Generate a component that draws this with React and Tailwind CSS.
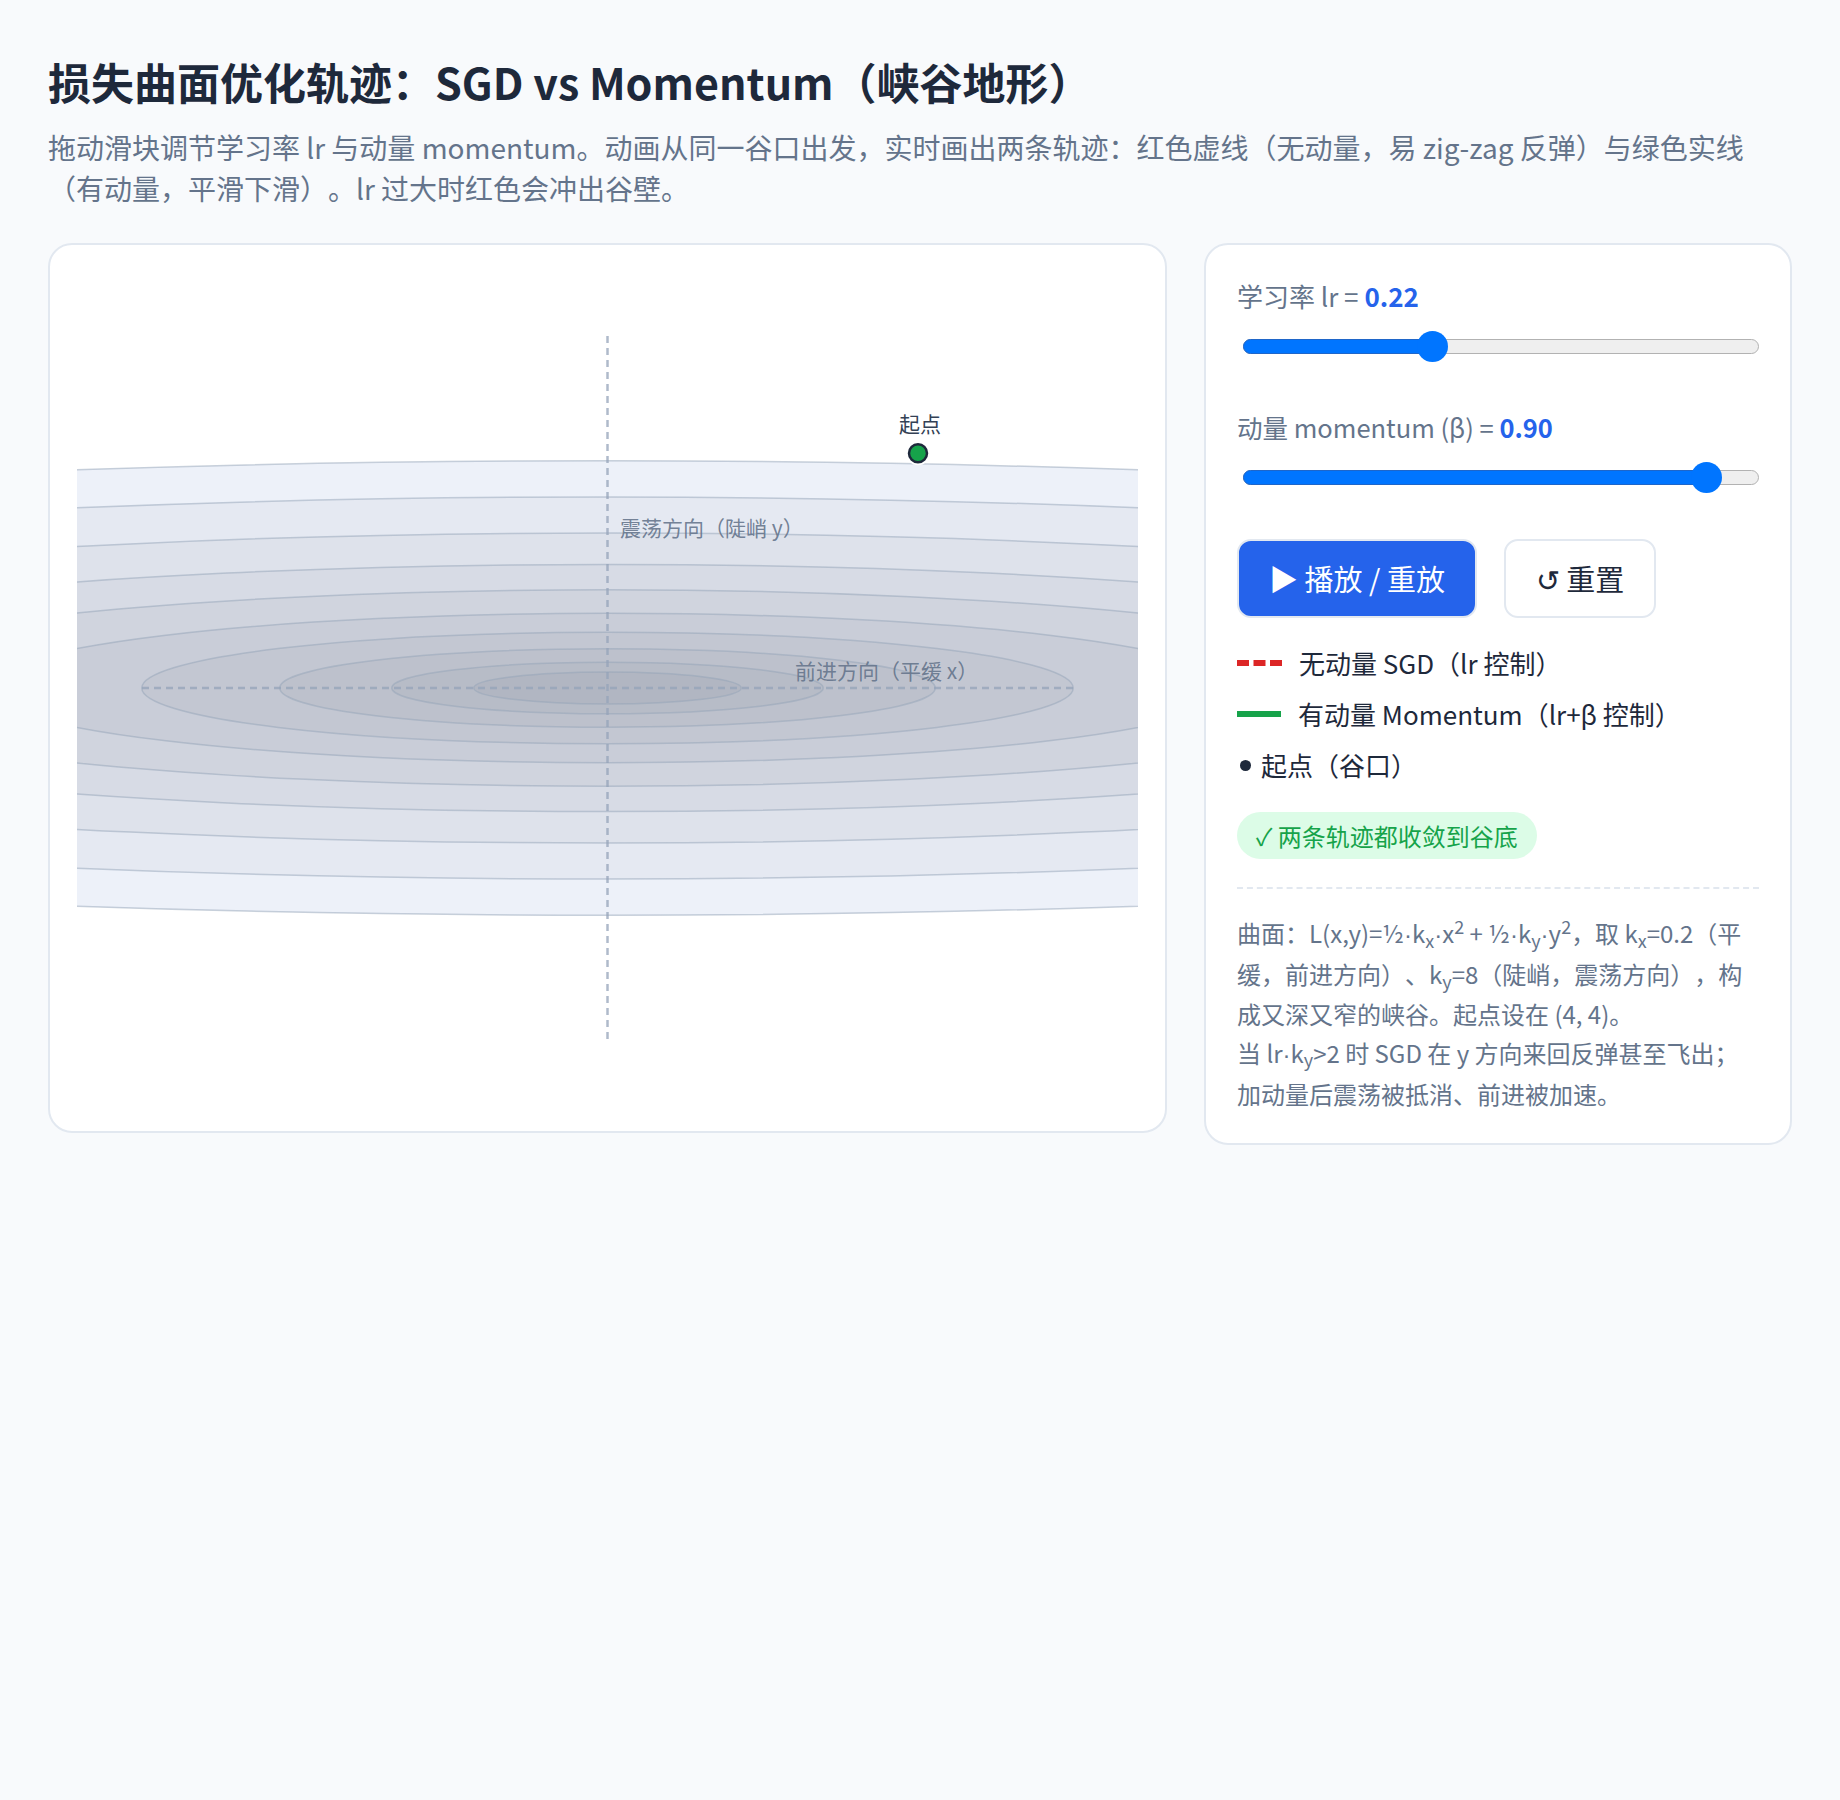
import React from "react";

const levels = [227.2, 191, 155, 123.6, 98.2, 74.7, 55.7, 39.2, 25.8, 16];
const fills = [
  "#edf1f9",
  "#e5e9f2",
  "#dee2eb",
  "#d7dbe5",
  "#d0d4de",
  "#c9cdd8",
  "#c3c7d2",
  "#bdc1cc",
  "#b7bcc7",
  "#b1b6c2",
];

function Chart() {
  const cx = 530.5;
  const cy = 416;
  return (
    <svg width="1061" height="832" viewBox="0 0 1061 832" className="block">
      {levels.map((b, i) => (
        <ellipse
          key={i}
          cx={cx}
          cy={cy}
          rx={b * 8.361}
          ry={b}
          fill={fills[i]}
          stroke="#94a3b8"
          strokeOpacity={0.5}
          strokeWidth={1.5}
        />
      ))}
      <line x1={cx} y1={64} x2={cx} y2={768} stroke="#94a3b8" strokeOpacity={0.75} strokeWidth={2.5} strokeDasharray="7 5" />
      <line x1={65} y1={cy} x2={996} y2={cy} stroke="#94a3b8" strokeOpacity={0.75} strokeWidth={2.5} strokeDasharray="7 5" />
      <text x={543} y={263.5} fontSize={21} fill="#64748b" fillOpacity={0.9}>
        震荡方向（陡峭 y）
      </text>
      <text x={718} y={407} fontSize={21} fill="#64748b" fillOpacity={0.9}>
        前进方向（平缓 x）
      </text>
      <text x={843} y={160} fontSize={21} textAnchor="middle" fill="#334155">
        起点
      </text>
      <circle cx={841} cy={181.3} r={12} fill="#ffffff" />
      <circle cx={841} cy={181.3} r={9} fill="#16a34a" stroke="#1e293b" strokeWidth={2.5} />
    </svg>
  );
}

function Slider1() {
  return (
    <div className="relative h-[31px]">
      <div className="absolute left-[6px] right-0 top-[8px] h-[15px] rounded-full border-[1.5px] border-[#b2b2b2] bg-[#efefef]" />
      <div className="absolute left-[6px] top-[8px] h-[15px] w-[190px] rounded-full border-[1.5px] border-[#1f66c9] bg-[#0075ff]" />
      <div className="absolute left-[180px] top-0 h-[31px] w-[31px] rounded-full bg-[#0075ff]" />
    </div>
  );
}

function Slider2() {
  return (
    <div className="relative h-[31px]">
      <div className="absolute left-[6px] right-0 top-[8px] h-[15px] rounded-full border-[1.5px] border-[#b2b2b2] bg-[#efefef]" />
      <div className="absolute left-[6px] top-[8px] h-[15px] w-[464px] rounded-full border-[1.5px] border-[#1f66c9] bg-[#0075ff]" />
      <div className="absolute left-[454px] top-0 h-[31px] w-[31px] rounded-full bg-[#0075ff]" />
    </div>
  );
}

function Dot() {
  return <span className="font-['Liberation_Sans',sans-serif]">·</span>;
}

export default function App() {
  return (
    <div className="min-h-[1800px] bg-[#f8fafc] px-[48px] pt-[54px] font-['Noto_Sans_CJK_SC',sans-serif] [text-spacing-trim:space-all]">
      <h1 className="text-[43px] font-bold leading-[54px] text-[#1e293b]">
        损失曲面优化轨迹：SGD vs Momentum（峡谷地形）
      </h1>
      <p className="mt-[19px] text-[28px] leading-[40.5px] text-[#64748b]">
        拖动滑块调节学习率 lr 与动量 momentum。动画从同一谷口出发，实时画出两条轨迹：红色虚线（无动量，易 zig-zag 反弹）与绿色实线（有动量，平滑下滑）。lr 过大时红色会冲出谷壁。
      </p>

      <div className="mt-[35px] grid grid-cols-[1fr_588px] items-start gap-[37px]">
        <div className="rounded-[24px] border-2 border-[#e2e8f0] bg-white p-[27px]">
          <Chart />
        </div>

        <div className="flex flex-col rounded-[24px] border-2 border-[#e2e8f0] bg-white px-[31px] pb-[30px] pt-[33px]">
          <div className="text-[26px] leading-[36px] text-[#64748b]">
            学习率 lr = <span className="font-bold text-[#2563eb]">0.22</span>
          </div>
          <div className="mt-[17px]">
            <Slider1 />
          </div>
          <div className="mt-[47px] text-[25.5px] leading-[36px] text-[#64748b]">
            动量 momentum (β) = <span className="font-bold text-[#2563eb]">0.90</span>
          </div>
          <div className="mt-[17px]">
            <Slider2 />
          </div>

          <div className="mt-[46px] flex gap-[27px]">
            <button className="flex h-[79px] w-[240px] items-center justify-center rounded-[14px] border-2 border-[#e2e8f0] bg-[#2563eb] text-[29px] text-white">
              ▶ 播放 / 重放
            </button>
            <button className="flex h-[79px] w-[152px] items-center justify-center rounded-[14px] border-2 border-[#e2e8f0] bg-white text-[29px] text-[#1e293b]">
              ↺ 重置
            </button>
          </div>

          <div className="mt-[27px] flex flex-col gap-[15px] text-[26px] leading-[36px] text-[#1e293b]">
            <div className="flex items-center gap-[17px]">
              <svg width="45" height="6" className="block shrink-0">
                <line x1="0" y1="3" x2="45" y2="3" stroke="#dc2626" strokeWidth="6" strokeDasharray="12 4.5" />
              </svg>
              <span>无动量 SGD（lr 控制）</span>
            </div>
            <div className="flex items-center gap-[17px]">
              <span className="block h-[6px] w-[44px] shrink-0 bg-[#16a34a]" />
              <span>有动量 Momentum（lr+β 控制）</span>
            </div>
            <div className="flex items-center gap-[10px]">
              <span className="ml-[3px] block h-[11px] w-[11px] shrink-0 rounded-full bg-[#1e293b]" />
              <span>起点（谷口）</span>
            </div>
          </div>

          <div className="mt-[29px] flex h-[47px] items-center self-start rounded-full bg-[#dcfce7] px-[19px] text-[24px] text-[#16a34a]">
            ✓ 两条轨迹都收敛到谷底
          </div>

          <div className="mt-[28px] border-t-2 border-dashed border-[#e2e8f0]" />

          <p className="mt-[24px] text-[24px] leading-[39.3px] text-[#64748b]">
            曲面：L(x,y)=½<Dot />k<sub>x</sub><Dot />x<sup>2</sup> + ½<Dot />k<sub>y</sub><Dot />y<sup>2</sup>，取 k<sub>x</sub>=0.2（平缓，前进方向）、k<sub>y</sub>=8（陡峭，震荡方向），构成又深又窄的峡谷。起点设在 (4, 4)。
            <br />
            当 lr<Dot />k<sub>y</sub>&gt;2 时 SGD 在 y 方向来回反弹甚至飞出；
            <br />
            加动量后震荡被抵消、前进被加速。
          </p>
        </div>
      </div>
    </div>
  );
}
